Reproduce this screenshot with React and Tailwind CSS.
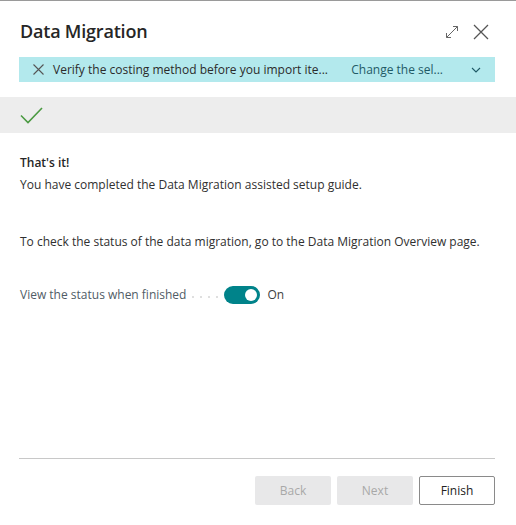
import React from "react";

export default function App() {
  const font = { fontFamily: '"Segoe UI", "Open Sans", "Noto Sans", sans-serif' };
  return (
    <div className="w-[516px] h-[525px] bg-white border-t border-[#9a9a9a] flex flex-col text-[#212121]" style={font}>
      <div className="flex items-center justify-between pl-5 pr-[27px] pt-[15px] h-[46px]">
        <div className="text-[18px] font-semibold text-[#262626] tracking-[-0.2px]">Data Migration</div>
        <div className="flex items-center gap-[14px] text-[#555]">
          <svg width="14" height="14" viewBox="0 0 14 14" fill="none" stroke="#666" strokeWidth="1">
            <path d="M1.5 12.5 L12.5 1.5 M8 1.5 H12.5 V6 M1.5 8 V12.5 H6" />
          </svg>
          <svg width="16" height="16" viewBox="0 0 16 16" fill="none" stroke="#555" strokeWidth="1.3">
            <path d="M1 1 L15 15 M15 1 L1 15" />
          </svg>
        </div>
      </div>
      <div className="ml-[19px] mr-[21px] mt-[10px] h-[25px] bg-[#b3e9ed] flex items-center text-[12px] text-[#2b2b2b]">
        <svg className="ml-[14px] mr-[9px]" width="11" height="11" viewBox="0 0 11 11" fill="none" stroke="#555" strokeWidth="1.1">
          <path d="M0.5 0.5 L10.5 10.5 M10.5 0.5 L0.5 10.5" />
        </svg>
        <span className="whitespace-nowrap">Verify the costing method before you import ite...</span>
        <span className="ml-auto whitespace-nowrap text-[#1f5a66]">Change the sel...</span>
        <svg className="ml-[28px] mr-[14px]" width="10" height="6" viewBox="0 0 10 6" fill="none" stroke="#1f5a66" strokeWidth="1.1">
          <path d="M1 1 L5 5 L9 1" />
        </svg>
      </div>
      <div className="mt-[15px] h-[36px] bg-[#ededed] flex items-center pl-5">
        <svg width="23" height="17" viewBox="0 0 23 17" fill="none" stroke="#4b9a42" strokeWidth="1.6">
          <path d="M1 8.5 L8 15.5 L22 1" />
        </svg>
      </div>
      <div className="px-5 pt-[19px] text-[12px] text-[#303030] leading-[22px]">
        <div className="font-semibold text-[#262626]">That's it!</div>
        <div>You have completed the Data Migration assisted setup guide.</div>
        <div className="mt-[35px]">To check the status of the data migration, go to the Data Migration Overview page.</div>
        <div className="mt-[31px] flex items-center">
          <span className="text-[#505c66]">View the status when finished</span>
          <span className="ml-[6px] w-[26px] flex justify-between items-center translate-y-[2px]">
            <span className="w-[2px] h-[2px] rounded-full bg-[#d4d4d4]"></span>
            <span className="w-[2px] h-[2px] rounded-full bg-[#d4d4d4]"></span>
            <span className="w-[2px] h-[2px] rounded-full bg-[#d4d4d4]"></span>
            <span className="w-[2px] h-[2px] rounded-full bg-[#d4d4d4]"></span>
          </span>
          <span className="ml-[6px] w-[36px] h-[18px] rounded-full bg-[#00838a] flex items-center justify-end pr-[3px]">
            <span className="w-[12px] h-[12px] rounded-full bg-white"></span>
          </span>
          <span className="ml-[7px] text-[#404040]">On</span>
        </div>
      </div>
      <div className="flex-1" />
      <div className="ml-[19px] mr-[21px] border-t border-[#c8c8c8]" />
      <div className="flex justify-end gap-[6px] ml-[19px] mr-[21px] mt-[17px] mb-[20px] text-[12px]">
        <div className="w-[76px] h-[29px] rounded-[2px] bg-[#e8e8e9] text-[#a8a8a8] flex items-center justify-center">Back</div>
        <div className="w-[76px] h-[29px] rounded-[2px] bg-[#e8e8e9] text-[#a8a8a8] flex items-center justify-center">Next</div>
        <div className="w-[76px] h-[29px] rounded-[2px] border border-[#8a8a8a] text-[#222] flex items-center justify-center">Finish</div>
      </div>
    </div>
  );
}
